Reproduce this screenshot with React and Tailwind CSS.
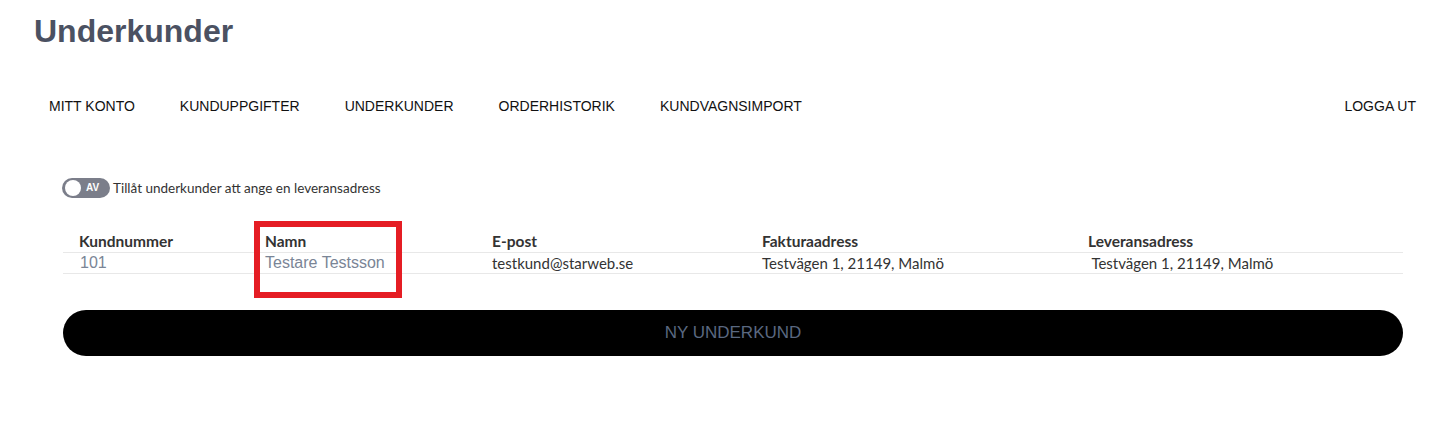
const navItems = ["MITT KONTO", "KUNDUPPGIFTER", "UNDERKUNDER", "ORDERHISTORIK", "KUNDVAGNSIMPORT"];

const columns = ["Kundnummer", "Namn", "E-post", "Fakturaadress", "Leveransadress"];

const rows = [
  {
    id: "101",
    name: "Testare Testsson",
    email: "testkund@starweb.se",
    billing: "Testvägen 1, 21149, Malmö",
    shipping: "\u00a0Testvägen 1, 21149, Malmö",
  },
];

const grid = "grid grid-cols-[186px_227px_270px_326px_1fr]";

function Toggle() {
  return (
    <div className="flex h-[20px] w-[48px] items-center rounded-full bg-[#7b7e8a] pl-[3px]">
      <span className="h-[16px] w-[16px] rounded-full bg-white" />
      <span className="ml-[5px] text-[10px] font-bold leading-none text-white font-['Liberation_Sans',sans-serif]">
        AV
      </span>
    </div>
  );
}

export default function App() {
  return (
    <div className="min-h-[431px] w-full bg-white font-['Liberation_Sans',Arial,sans-serif]">
      <h1 className="pl-[34px] pt-[11px] text-[32px] font-bold leading-[40px] text-[#4b5162]">Underkunder</h1>

      <nav className="mt-[45px] flex items-center pl-[49px] pr-[31px] text-[14px] leading-[20px] text-[#111]">
        <div className="flex gap-[45px]">
          {navItems.map((item) => (
            <span key={item}>{item}</span>
          ))}
        </div>
        <span className="ml-auto">LOGGA UT</span>
      </nav>

      <div className="mt-[62px] flex h-[20px] items-center gap-[3px] pl-[62px]">
        <Toggle />
        <span className="text-[13.5px] leading-[20px] text-[#333] font-['Lato',sans-serif]">
          Tillåt underkunder att ange en leveransadress
        </span>
      </div>

      <div className="relative ml-[63px] mr-[44px] mt-[34px]">
        <div className={`${grid} h-[21px] border-b border-[#e8e8e8] text-[15.5px] font-bold leading-[18px] text-[#333] font-['Lato',sans-serif]`}>
          {columns.map((c) => (
            <div key={c} className="pl-[16px]">
              {c}
            </div>
          ))}
        </div>
        {rows.map((r) => (
          <div key={r.id} className={`${grid} h-[21px] border-b border-[#e8e8e8] pt-[1px] leading-[18px]`}>
            <div className="pl-[17px] text-[16px] text-[#7a8596]">{r.id}</div>
            <div className="pl-[16px] text-[16px] text-[#7a8596]">{r.name}</div>
            <div className="pl-[16px] text-[15px] text-[#333] font-['Lato',sans-serif]">{r.email}</div>
            <div className="pl-[16px] text-[15px] text-[#333] font-['Lato',sans-serif]">{r.billing}</div>
            <div className="pl-[16px] text-[15px] text-[#333] font-['Lato',sans-serif]">{r.shipping}</div>
          </div>
        ))}
        {/* highlight frame around the name column */}
        <div className="pointer-events-none absolute left-[191px] top-[-11px] h-[77px] w-[148px] border-[6px] border-[#e51d24]" />
      </div>

      <div className="ml-[63px] mr-[44px] mt-[36px]">
        <button className="flex h-[46px] w-full items-center justify-center rounded-full bg-black text-[17px] text-[#5a6880]">
          NY UNDERKUND
        </button>
      </div>
    </div>
  );
}
